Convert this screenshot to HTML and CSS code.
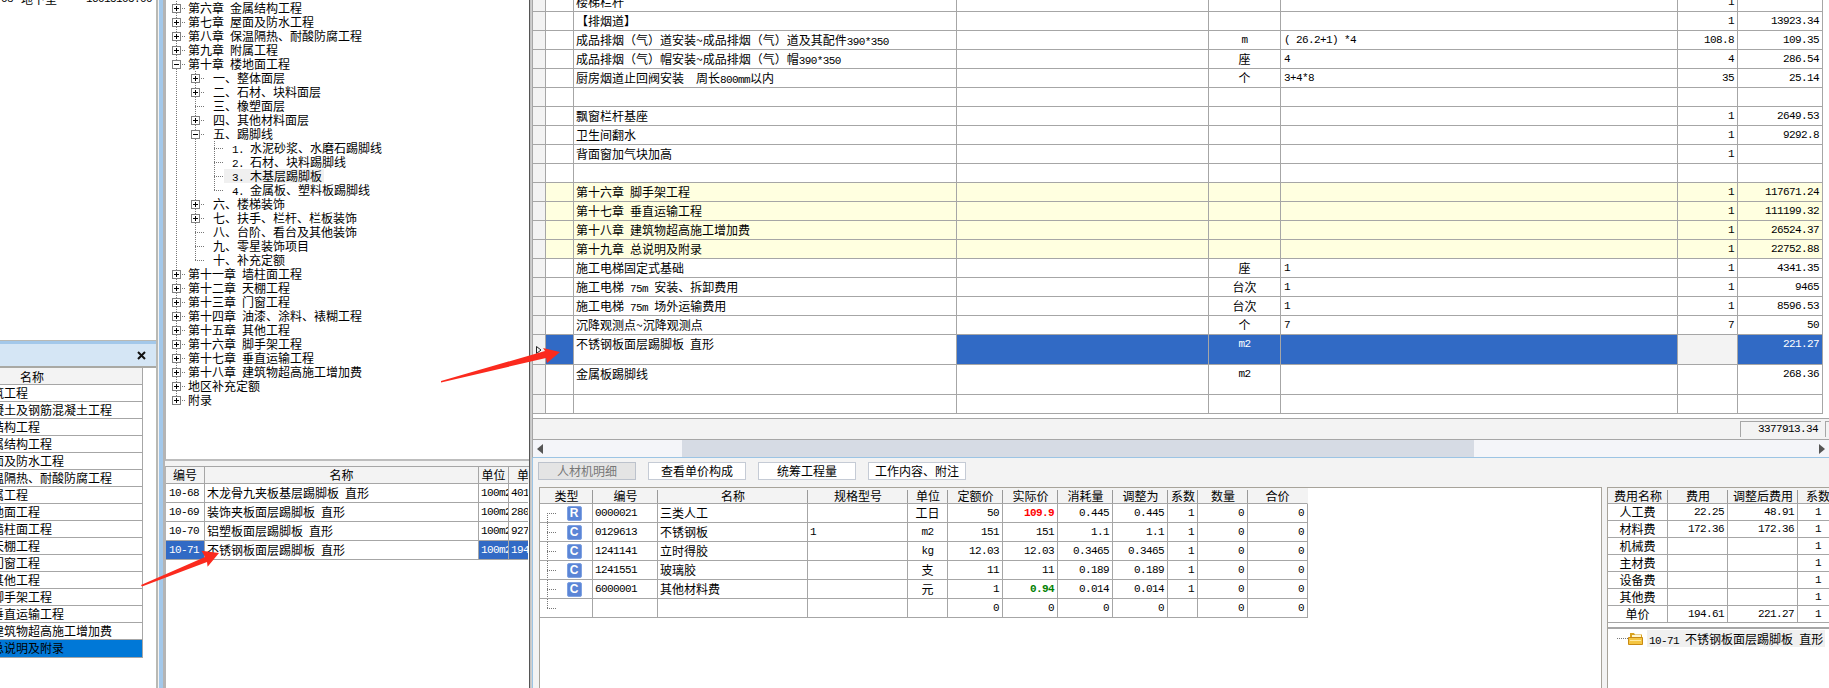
FILE: index.html
```html
<!DOCTYPE html>
<html lang="zh-CN">
<head>
<meta charset="utf-8">
<title>定额计价</title>
<link rel="stylesheet" href="styles.css">
</head>
<body>
<div class="app">
  <aside class="left">
    <div class="left-main">
      <div class="left-top"><div class="clip-line"><span class="l">03</span><span class="clip-name">地下室</span><span class="l clip-num">16015105.00</span></div></div>
      <div class="left-band"></div>
      <div class="left-title"><svg class="close" width="9" height="9" viewBox="0 0 9 9"><path d="M1 1 L8 8 M8 1 L1 8" stroke="#111" stroke-width="2"/></svg></div>
      <div class="chapters">
        <div class="chap-head">名称</div>
        <div class="chap">第三章 砌筑工程</div>
        <div class="chap">第四章 混凝土及钢筋混凝土工程</div>
        <div class="chap">第五章 木结构工程</div>
        <div class="chap">第六章 金属结构工程</div>
        <div class="chap">第七章 屋面及防水工程</div>
        <div class="chap">第八章 保温隔热、耐酸防腐工程</div>
        <div class="chap">第九章 附属工程</div>
        <div class="chap">第十章 楼地面工程</div>
        <div class="chap">第十一章 墙柱面工程</div>
        <div class="chap">第十二章 天棚工程</div>
        <div class="chap">第十三章 门窗工程</div>
        <div class="chap">第十五章 其他工程</div>
        <div class="chap">第十六章 脚手架工程</div>
        <div class="chap">第十七章 垂直运输工程</div>
        <div class="chap">第十八章 建筑物超高施工增加费</div>
        <div class="chap chap-sel">第十九章 总说明及附录</div>
      </div>
    </div>
    <div class="splitter"></div>
  </aside>

  <section class="middle">
    <div class="tree">
      <div class="tr"><i class="g t"><b class="box plus"></b></i><span class="tx">第六章 金属结构工程</span></div>
      <div class="tr"><i class="g t"><b class="box plus"></b></i><span class="tx">第七章 屋面及防水工程</span></div>
      <div class="tr"><i class="g t"><b class="box plus"></b></i><span class="tx">第八章 保温隔热、耐酸防腐工程</span></div>
      <div class="tr"><i class="g t"><b class="box plus"></b></i><span class="tx">第九章 附属工程</span></div>
      <div class="tr"><i class="g t"><b class="box minus"></b></i><span class="tx">第十章 楼地面工程</span></div>
      <div class="tr"><i class="g v"></i><i class="g t"><b class="box plus"></b></i><span class="tx lv">一、整体面层</span></div>
      <div class="tr"><i class="g v"></i><i class="g t"><b class="box plus"></b></i><span class="tx lv">二、石材、块料面层</span></div>
      <div class="tr"><i class="g v"></i><i class="g t"></i><span class="tx lv">三、橡塑面层</span></div>
      <div class="tr"><i class="g v"></i><i class="g t"><b class="box plus"></b></i><span class="tx lv">四、其他材料面层</span></div>
      <div class="tr"><i class="g v"></i><i class="g t"><b class="box minus"></b></i><span class="tx lv">五、踢脚线</span></div>
      <div class="tr"><i class="g v"></i><i class="g v"></i><i class="g t"></i><span class="tx lv"><span class="l">1. </span>水泥砂浆、水磨石踢脚线</span></div>
      <div class="tr"><i class="g v"></i><i class="g v"></i><i class="g t"></i><span class="tx lv"><span class="l">2. </span>石材、块料踢脚线</span></div>
      <div class="tr"><i class="g v"></i><i class="g v"></i><i class="g t"></i><span class="tx lv tx-on"><span class="l">3. </span>木基层踢脚板</span></div>
      <div class="tr"><i class="g v"></i><i class="g v"></i><i class="g e"></i><span class="tx lv"><span class="l">4. </span>金属板、塑料板踢脚线</span></div>
      <div class="tr"><i class="g v"></i><i class="g t"><b class="box plus"></b></i><span class="tx lv">六、楼梯装饰</span></div>
      <div class="tr"><i class="g v"></i><i class="g t"><b class="box plus"></b></i><span class="tx lv">七、扶手、栏杆、栏板装饰</span></div>
      <div class="tr"><i class="g v"></i><i class="g t"></i><span class="tx lv">八、台阶、看台及其他装饰</span></div>
      <div class="tr"><i class="g v"></i><i class="g t"></i><span class="tx lv">九、零星装饰项目</span></div>
      <div class="tr"><i class="g v"></i><i class="g e"></i><span class="tx lv">十、补充定额</span></div>
      <div class="tr"><i class="g t"><b class="box plus"></b></i><span class="tx">第十一章 墙柱面工程</span></div>
      <div class="tr"><i class="g t"><b class="box plus"></b></i><span class="tx">第十二章 天棚工程</span></div>
      <div class="tr"><i class="g t"><b class="box plus"></b></i><span class="tx">第十三章 门窗工程</span></div>
      <div class="tr"><i class="g t"><b class="box plus"></b></i><span class="tx">第十四章 油漆、涂料、裱糊工程</span></div>
      <div class="tr"><i class="g t"><b class="box plus"></b></i><span class="tx">第十五章 其他工程</span></div>
      <div class="tr"><i class="g t"><b class="box plus"></b></i><span class="tx">第十六章 脚手架工程</span></div>
      <div class="tr"><i class="g t"><b class="box plus"></b></i><span class="tx">第十七章 垂直运输工程</span></div>
      <div class="tr"><i class="g t"><b class="box plus"></b></i><span class="tx">第十八章 建筑物超高施工增加费</span></div>
      <div class="tr"><i class="g t"><b class="box plus"></b></i><span class="tx">地区补充定额</span></div>
      <div class="tr"><i class="g e"><b class="box plus"></b></i><span class="tx">附录</span></div>
    </div>
    <div class="mid-gap"></div>
    <div class="quota">
      <div class="q-row q-head"><span>编号</span><span>名称</span><span>单位</span><span class="q-clip">单价</span></div>
      <div class="q-row"><span class="l q-code">10-68</span><span class="q-name">木龙骨九夹板基层踢脚板 直形</span><span class="l q-unit">100m2</span><span class="l q-price">401.52</span></div>
      <div class="q-row"><span class="l q-code">10-69</span><span class="q-name">装饰夹板面层踢脚板 直形</span><span class="l q-unit">100m2</span><span class="l q-price">280.21</span></div>
      <div class="q-row"><span class="l q-code">10-70</span><span class="q-name">铝塑板面层踢脚板 直形</span><span class="l q-unit">100m2</span><span class="l q-price">927.53</span></div>
      <div class="q-row q-sel"><span class="l q-code">10-71</span><span class="q-name">不锈钢板面层踢脚板 直形</span><span class="l q-unit">100m2</span><span class="l q-price">194.61</span></div>
    </div>
  </section>

  <div class="mid-split"></div>

  <main class="right">
    <div class="grid">
      <div class="grid-scroll">
        <div class="row"><i></i><i></i><span>楼梯栏杆</span><i></i><i></i><i></i><span class="r l">1</span><i></i><i class="rest"></i></div>
        <div class="row"><i></i><i></i><span>【排烟道】</span><i></i><i></i><i></i><span class="r l">1</span><span class="r l">13923.34</span><i class="rest"></i></div>
        <div class="row"><i></i><i></i><span>成品排烟（气）道安装~成品排烟（气）道及其配件<span class="l">390*350</span></span><i></i><span class="u l">m</span><span class="f l">( 26.2+1) *4</span><span class="r l">108.8</span><span class="r l">109.35</span><i class="rest"></i></div>
        <div class="row"><i></i><i></i><span>成品排烟（气）帽安装~成品排烟（气）帽<span class="l">390*350</span></span><i></i><span class="u">座</span><span class="f l">4</span><span class="r l">4</span><span class="r l">286.54</span><i class="rest"></i></div>
        <div class="row"><i></i><i></i><span>厨房烟道止回阀安装　周长<span class="l">800mm</span>以内</span><i></i><span class="u">个</span><span class="f l">3+4*8</span><span class="r l">35</span><span class="r l">25.14</span><i class="rest"></i></div>
        <div class="row"><i></i><i></i><i></i><i></i><i></i><i></i><i></i><i></i><i class="rest"></i></div>
        <div class="row"><i></i><i></i><span>飘窗栏杆基座</span><i></i><i></i><i></i><span class="r l">1</span><span class="r l">2649.53</span><i class="rest"></i></div>
        <div class="row"><i></i><i></i><span>卫生间翻水</span><i></i><i></i><i></i><span class="r l">1</span><span class="r l">9292.8</span><i class="rest"></i></div>
        <div class="row"><i></i><i></i><span>背面窗加气块加高</span><i></i><i></i><i></i><span class="r l">1</span><i></i><i class="rest"></i></div>
        <div class="row"><i></i><i></i><i></i><i></i><i></i><i></i><i></i><i></i><i class="rest"></i></div>
        <div class="row yel"><i></i><i></i><span>第十六章 脚手架工程</span><i></i><i></i><i></i><span class="r l">1</span><span class="r l">117671.24</span><i class="rest"></i></div>
        <div class="row yel"><i></i><i></i><span>第十七章 垂直运输工程</span><i></i><i></i><i></i><span class="r l">1</span><span class="r l">111199.32</span><i class="rest"></i></div>
        <div class="row yel"><i></i><i></i><span>第十八章 建筑物超高施工增加费</span><i></i><i></i><i></i><span class="r l">1</span><span class="r l">26524.37</span><i class="rest"></i></div>
        <div class="row yel"><i></i><i></i><span>第十九章 总说明及附录</span><i></i><i></i><i></i><span class="r l">1</span><span class="r l">22752.88</span><i class="rest"></i></div>
        <div class="row"><i></i><i></i><span>施工电梯固定式基础</span><i></i><span class="u">座</span><span class="f l">1</span><span class="r l">1</span><span class="r l">4341.35</span><i class="rest"></i></div>
        <div class="row"><i></i><i></i><span>施工电梯 <span class="l">75m</span> 安装、拆卸费用</span><i></i><span class="u">台次</span><span class="f l">1</span><span class="r l">1</span><span class="r l">9465</span><i class="rest"></i></div>
        <div class="row"><i></i><i></i><span>施工电梯 <span class="l">75m</span> 场外运输费用</span><i></i><span class="u">台次</span><span class="f l">1</span><span class="r l">1</span><span class="r l">8596.53</span><i class="rest"></i></div>
        <div class="row"><i></i><i></i><span>沉降观测点~沉降观测点</span><i></i><span class="u">个</span><span class="f l">7</span><span class="r l">7</span><span class="r l">50</span><i class="rest"></i></div>
        <div class="row tall sel"><i class="ptr"><svg width="6" height="8" viewBox="0 0 6 8"><path d="M0.5 0.5 L5 4 L0.5 7.5 Z" fill="none" stroke="#222"/></svg></i><i class="b"></i><span>不锈钢板面层踢脚板 直形</span><i class="b"></i><span class="u l b">m2</span><i class="b"></i><i></i><span class="r l b">221.27</span><i class="rest"></i></div>
        <div class="row tall"><i></i><i></i><span>金属板踢脚线</span><i></i><span class="u l">m2</span><i></i><i></i><span class="r l">268.36</span><i class="rest"></i></div>
        <div class="row"><i></i><i></i><i></i><i></i><i></i><i></i><i></i><i></i><i class="rest"></i></div>
      </div>
    </div>
    <div class="grid-foot"><span class="total l">3377913.34</span><span class="total-next"></span></div>
    <div class="hscroll">
      <span class="arr"><svg width="6" height="10" viewBox="0 0 6 10"><path d="M6 0 V10 L0 5 Z" fill="#555"/></svg></span>
      <span class="thumb"></span>
      <span class="arr arr-r"><svg width="6" height="10" viewBox="0 0 6 10"><path d="M0 0 V10 L6 5 Z" fill="#555"/></svg></span>
    </div>

    <div class="bottom">
      <div class="tabs">
        <span class="tab tab-on">人材机明细</span>
        <span class="tab">查看单价构成</span>
        <span class="tab">统筹工程量</span>
        <span class="tab">工作内容、附注</span>
      </div>
      <div class="panes">
        <div class="mats">
          <div class="m-row m-head"><span class="m-type">类型</span><span>编号</span><span>名称</span><span>规格型号</span><span>单位</span><span>定额价</span><span>实际价</span><span>消耗量</span><span>调整为</span><span>系数</span><span>数量</span><span>合价</span></div>
          <div class="m-row"><i class="lk lk-first"></i><span class="ic"><b class="ico">R</b></span><span class="l">0000021</span><span>三类人工</span><i></i><span class="u">工日</span><span class="r l">50</span><span class="r l red">109.9</span><span class="r l">0.445</span><span class="r l">0.445</span><span class="r l">1</span><span class="r l">0</span><span class="r l">0</span></div>
          <div class="m-row"><i class="lk"></i><span class="ic"><b class="ico">C</b></span><span class="l">0129613</span><span>不锈钢板</span><span class="l">1</span><span class="u l">m2</span><span class="r l">151</span><span class="r l">151</span><span class="r l">1.1</span><span class="r l">1.1</span><span class="r l">1</span><span class="r l">0</span><span class="r l">0</span></div>
          <div class="m-row"><i class="lk"></i><span class="ic"><b class="ico">C</b></span><span class="l">1241141</span><span>立时得胶</span><i></i><span class="u l">kg</span><span class="r l">12.03</span><span class="r l">12.03</span><span class="r l">0.3465</span><span class="r l">0.3465</span><span class="r l">1</span><span class="r l">0</span><span class="r l">0</span></div>
          <div class="m-row"><i class="lk"></i><span class="ic"><b class="ico">C</b></span><span class="l">1241551</span><span>玻璃胶</span><i></i><span class="u">支</span><span class="r l">11</span><span class="r l">11</span><span class="r l">0.189</span><span class="r l">0.189</span><span class="r l">1</span><span class="r l">0</span><span class="r l">0</span></div>
          <div class="m-row"><i class="lk"></i><span class="ic"><b class="ico">C</b></span><span class="l">6000001</span><span>其他材料费</span><i></i><span class="u">元</span><span class="r l">1</span><span class="r l green">0.94</span><span class="r l">0.014</span><span class="r l">0.014</span><span class="r l">1</span><span class="r l">0</span><span class="r l">0</span></div>
          <div class="m-row"><i class="lk lk-last"></i><i></i><i></i><i></i><i></i><i></i><span class="r l">0</span><span class="r l">0</span><span class="r l">0</span><span class="r l">0</span><i></i><span class="r l">0</span><span class="r l">0</span></div>
        </div>
        <div class="fees">
          <div class="fee-table">
            <div class="fee-row fee-head"><span>费用名称</span><span>费用</span><span>调整后费用</span><span>系数</span></div>
            <div class="fee-row"><span class="u">人工费</span><span class="r l">22.25</span><span class="r l">48.91</span><span class="fc l">1</span></div>
            <div class="fee-row"><span class="u">材料费</span><span class="r l">172.36</span><span class="r l">172.36</span><span class="fc l">1</span></div>
            <div class="fee-row"><span class="u">机械费</span><i></i><i></i><span class="fc l">1</span></div>
            <div class="fee-row"><span class="u">主材费</span><i></i><i></i><span class="fc l">1</span></div>
            <div class="fee-row"><span class="u">设备费</span><i></i><i></i><span class="fc l">1</span></div>
            <div class="fee-row"><span class="u">其他费</span><i></i><i></i><span class="fc l">1</span></div>
            <div class="fee-row"><span class="u">单价</span><span class="r l">194.61</span><span class="r l">221.27</span><span class="fc l">1</span></div>
          </div>
          <div class="fee-tree">
            <i class="dots"></i>
            <svg class="folder" width="15" height="13" viewBox="0 0 15 13"><path d="M2 1 H6 L7 2.5 H14 V5 H2 Z" fill="#d9a21e"/><path d="M4 3 H13 V6 H4 Z" fill="#fff6d0"/><path d="M0.5 5.5 H14.5 V12.5 H0.5 Z" fill="#f4c542" stroke="#c98a12"/><path d="M2 8 H13 V9 H2 Z" fill="#ffe9a0"/></svg>
            <span class="fee-label"><span class="l">10-71</span> 不锈钢板面层踢脚板 直形</span>
          </div>
        </div>
      </div>
    </div>
  </main>
</div>

<svg class="arrows" width="1829" height="688" viewBox="0 0 1829 688">
  <polygon points="441,381 545,351 543,348 560,352 547,363 546,358 441,382.5" fill="#fb2a1e"/>
  <polygon points="141,585 205,557 201.5,550.7 219,553 207.6,566.7 207,562 142,586.5" fill="#fb2a1e"/>
</svg>
</body>
</html>
```

FILE: styles.css
```css
* { box-sizing: border-box; }
html, body { margin: 0; padding: 0; }
body {
  width: 1829px;
  height: 688px;
  overflow: hidden;
  position: relative;
  background: #f3f3f3;
  color: #000;
  font: 12px/14px "Noto Sans CJK SC", "Liberation Sans", sans-serif;
  word-spacing: 3.4px;
}
i { font-style: normal; display: block; }

.l {
  font-family: "Liberation Mono", monospace;
  font-size: 11px;
  letter-spacing: -0.6px;
  word-spacing: 0;
  white-space: pre;
}

.app { display: flex; width: 1829px; height: 688px; }

/* left column */
.left { width: 165px; display: flex; flex: none; }
.left-main {
  width: 158px;
  display: flex;
  flex-direction: column;
  background: #fff;
  border-right: 2px solid #b9b9b4;
  overflow: hidden;
}
.left-top { height: 341px; flex: none; overflow: hidden; border-bottom: 1px solid #b9b9b4; }
.clip-line { display: flex; margin-top: -8px; height: 14px; padding-left: 1px; white-space: pre; }
.clip-name { margin-left: 8px; }
.clip-num { margin-left: 29px; }
.left-band { height: 3px; flex: none; background: #a3c8ea; }
.left-title {
  height: 24px;
  flex: none;
  display: flex;
  align-items: center;
  justify-content: flex-end;
  padding-right: 10px;
  background: #d5e6f5;
  border-bottom: 2px solid #a9a9a4;
}
.chapters { width: 143px; flex: none; border-right: 1px solid #a6a6a6; border-bottom: 1px solid #a6a6a6; overflow: hidden; }
.chap-head {
  height: 17px;
  margin-left: -78px;
  background: #f3f3f3;
  text-align: center;
  line-height: 17px;
  border-bottom: 1px solid #a6a6a6;
}
.chap {
  height: 17px;
  padding-left: 0;
  margin-left: -62px;
  line-height: 16px;
  white-space: nowrap;
  border-bottom: 1px solid #a6a6a6;
}
.chap-sel { background: #0078d7; border-bottom: 0; }
.splitter {
  width: 7px;
  flex: none;
  background: #a3c8ea;
  border-left: 1px solid #f3f3f3;
  border-right: 2px solid #b4b4b4;
}

/* middle column */
.middle { width: 364px; flex: none; display: flex; flex-direction: column; }
.tree {
  height: 461px;
  flex: none;
  padding: 1px 0 0 1px;
  background: #fff;
  border-left: 1px solid #b4b4b4;
  border-bottom: 2px solid #bdbdbd;
  overflow: hidden;
}
.tr { display: flex; height: 14px; white-space: nowrap; }
.g { width: 19px; height: 14px; flex: none; display: flex; align-items: center; }
.v { background: repeating-linear-gradient(to bottom, #777 0 1px, transparent 1px 2px) 9px 0 / 1px 14px no-repeat; }
.t {
  background:
    repeating-linear-gradient(to bottom, #777 0 1px, transparent 1px 2px) 9px 0 / 1px 14px no-repeat,
    repeating-linear-gradient(to right, #777 0 1px, transparent 1px 2px) 9px 7px / 10px 1px no-repeat;
}
.e {
  background:
    repeating-linear-gradient(to bottom, #777 0 1px, transparent 1px 2px) 9px 0 / 1px 8px no-repeat,
    repeating-linear-gradient(to right, #777 0 1px, transparent 1px 2px) 9px 7px / 10px 1px no-repeat;
}
.box {
  width: 9px;
  height: 9px;
  margin-left: 5px;
  margin-top: 1px;
  border: 1px solid #808080;
  background-color: #fff;
  background-repeat: no-repeat;
}
.plus {
  background-image: linear-gradient(#000, #000), linear-gradient(#000, #000);
  background-size: 5px 1px, 1px 5px;
  background-position: 1px 3px, 3px 1px;
}
.minus {
  background-image: linear-gradient(#000, #000);
  background-size: 5px 1px;
  background-position: 1px 3px;
}
.tx { padding: 0 2px; height: 14px; line-height: 14px; }
.lv { padding-left: 8px; }
.tx-on { background: #f0f0f0; }

.mid-gap { height: 5px; flex: none; background: #f3f3f3; }
.quota {
  flex: 1;
  background: #fff;
  border-left: 1px solid #b4b4b4;
  border-top: 1px solid #a6a6a6;
}
.q-row { display: grid; grid-template-columns: 39px 274px 30px 19px; height: 19px; line-height: 18px; }
.q-row > span { border-right: 1px solid #a6a6a6; border-bottom: 1px solid #a6a6a6; overflow: hidden; white-space: nowrap; }
.q-head { height: 17px; line-height: 16px; background: #f3f3f3; }
.q-head > span { text-align: center; }
.q-head > .q-clip { text-align: left; padding-left: 8px; border-right: 0; }
.q-code { padding-left: 3px; }
.q-name { padding-left: 2px; }
.q-unit, .q-price { padding-left: 2px; }
.q-row > .q-price { border-right: 0; }
.q-sel .q-code, .q-sel .q-unit, .q-sel .q-price { background: #316ac5; color: #fff; }

.mid-split {
  width: 3px;
  flex: none;
  background: #c4c4c4;
  border-left: 1px solid #555;
  border-right: 1px solid #d0d0d0;
}

/* right column */
.right { flex: 1; min-width: 0; display: flex; flex-direction: column; }
.grid { height: 419px; flex: none; overflow: hidden; background: #fff; border-left: 1px solid #a6a6a6; border-bottom: 1px solid #a6a6a6; }
.grid-scroll { margin-top: -7px; border-bottom: 0; }
.row {
  display: grid;
  grid-template-columns: 13px 28px 383px 252px 72px 397px 60px 85px 6px;
  height: 19px;
  line-height: 18px;
  background: #fff;
}
.row > * {
  border-right: 1px solid #a6a6a6;
  border-bottom: 1px solid #a6a6a6;
  overflow: hidden;
  white-space: nowrap;
  padding: 0 2px;
}
.row > :first-child { background: #f3f3f3; padding: 0; }
.row > .rest { border-right: 0; border-bottom: 0; padding: 0; border-left: 0; background: #fff; }
.u { text-align: center; }
.row > .f { padding-left: 3px; }
.r { text-align: right; padding-right: 3px !important; }
.yel { background: #ffffe0; }
.tall { height: 30px; }
.sel > .b { background: #316ac5; color: #fff; }
.sel > :nth-child(7) { background: #f3f3f3; }
.ptr { display: flex; align-items: center; justify-content: center; }

.grid-foot { height: 20px; flex: none; display: flex; justify-content: flex-end; align-items: flex-end; padding-bottom: 2px; background: #f3f3f3; border-left: 1px solid #a6a6a6; }
.total {
  width: 81px;
  height: 16px;
  text-align: right;
  padding-right: 3px;
  line-height: 15px;
  border-top: 1px solid #a6a6a6;
  border-left: 1px solid #a6a6a6;
  background: #f3f3f3;
}
.total-next { width: 4px; height: 16px; margin-left: 4px; border-top: 1px solid #a6a6a6; border-left: 1px solid #a6a6a6; }
.hscroll {
  height: 19px;
  flex: none;
  display: flex;
  align-items: stretch;
  background: #f4f5f9;
  border-top: 1px solid #a6a6a6;
  border-left: 1px solid #a6a6a6;
  border-bottom: 1px solid #9cc4e4;
}
.arr { width: 149px; flex: none; display: flex; align-items: center; padding-left: 4px; }
.arr-r { flex: 1; justify-content: flex-end; padding: 0 4px 0 0; }
.thumb { width: 792px; flex: none; background: #d6dbe4; }

.bottom { flex: 1; min-height: 0; display: flex; flex-direction: column; border-left: 1px solid #9cc4e4; background: #f3f3f3; }
.tabs { display: flex; gap: 12px; padding: 4px 0 0 5px; height: 29px; flex: none; }
.tab {
  width: 98px;
  height: 18px;
  text-align: center;
  line-height: 16px;
  background: #fff;
  border: 1px solid #c5cbd5;
}
.tab-on { background: #e4e4e4; color: #777; border-color: #bcc2cc; }
.panes { flex: 1; min-height: 0; display: flex; gap: 5px; padding-left: 6px; }
.mats {
  width: 1063px;
  flex: none;
  background: #fff;
  border-top: 1px solid #a7a39a;
  border-left: 1px solid #a7a39a;
  border-right: 1px solid #a7a39a;
}
.m-row {
  display: grid;
  grid-template-columns: 16px 37px 65px 150px 100px 40px 55px 55px 55px 55px 30px 50px 60px;
  width: 768px;
  height: 19px;
  line-height: 18px;
}
.m-row > * { border-right: 1px solid #a6a6a6; border-bottom: 1px solid #a6a6a6; padding: 0 2px; overflow: hidden; white-space: nowrap; }
.m-head { height: 16px; line-height: 15px; background: #f3f3f3; }
.m-head > * { text-align: center; padding: 0; border-right: 0; background: linear-gradient(#999, #999) right 2px / 1px 13px no-repeat; }
.m-head > .m-type { grid-column: span 2; }
.m-head > :last-child { border-right: 1px solid #f3f3f3; background: none; }
.m-row > .lk {
  padding: 0;
  border-right: 0;
  background:
    repeating-linear-gradient(to bottom, #777 0 1px, transparent 1px 2px) 7px 0 / 1px 19px no-repeat,
    repeating-linear-gradient(to right, #777 0 1px, transparent 1px 2px) 7px 9px / 9px 1px no-repeat;
}
.m-row > .lk-first {
  background:
    repeating-linear-gradient(to bottom, #777 0 1px, transparent 1px 2px) 7px 9px / 1px 10px no-repeat,
    repeating-linear-gradient(to right, #777 0 1px, transparent 1px 2px) 7px 9px / 9px 1px no-repeat;
}
.m-row > .lk-last {
  background:
    repeating-linear-gradient(to bottom, #777 0 1px, transparent 1px 2px) 7px 0 / 1px 10px no-repeat,
    repeating-linear-gradient(to right, #777 0 1px, transparent 1px 2px) 7px 9px / 9px 1px no-repeat;
}
.ic { display: flex; align-items: center; justify-content: center; padding: 0 !important; }
.ico {
  width: 15px;
  height: 15px;
  border-radius: 2px;
  background: #5b85d6;
  border: 1px solid #7fa2e2;
  color: #fff;
  font: bold 12px/13px "Liberation Sans", sans-serif;
  text-align: center;
}
.red { color: #f00; font-weight: bold; }
.green { color: #008000; font-weight: bold; }

.fees { flex: 1; min-width: 0; display: flex; flex-direction: column; background: #fff; border-top: 1px solid #a7a39a; border-left: 1px solid #a7a39a; overflow: hidden; }
.fee-table { border-bottom: 2px solid #a6a6a6; padding-bottom: 4px; flex: none; }
.fee-row { display: grid; grid-template-columns: 60px 60px 70px 32px; height: 17px; line-height: 16px; }
.fee-row > * { border-right: 1px solid #a6a6a6; border-bottom: 1px solid #a6a6a6; overflow: hidden; white-space: nowrap; }
.fee-head { height: 16px; line-height: 15px; background: #f3f3f3; }
.fee-head > * { text-align: center; border-right: 0; background: linear-gradient(#999, #999) right 2px / 1px 13px no-repeat; }
.fee-head > :last-child { text-align: left; padding-left: 8px; background: none; }
.fee-row > .fc { padding-left: 17px; border-right: 0; }
.fee-tree { display: flex; align-items: center; height: 17px; padding-left: 9px; margin-top: 1px; white-space: nowrap; }
.dots { width: 11px; height: 1px; flex: none; background: repeating-linear-gradient(to right, #777 0 1px, transparent 1px 2px); }
.folder { flex: none; }
.fee-label { margin-left: 4px; padding: 0 2px; background: #f0f0f0; height: 17px; line-height: 17px; }

.arrows { position: absolute; left: 0; top: 0; pointer-events: none; }
```
